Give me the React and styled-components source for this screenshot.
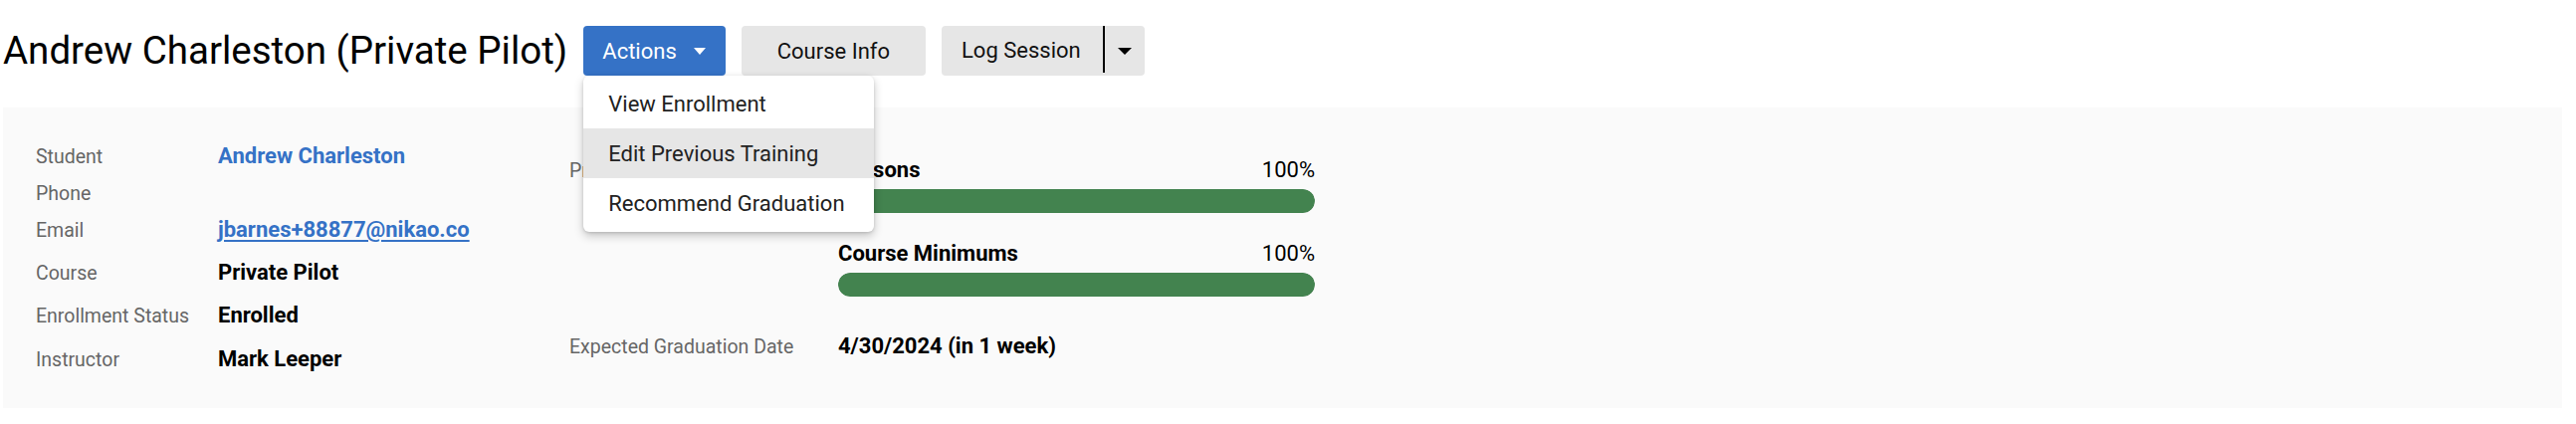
import React from "react";
import styled, { createGlobalStyle } from "styled-components";

const GlobalStyle = createGlobalStyle`
  body {
    margin: 0;
    background: #fff;
    font-family: Roboto, "Liberation Sans", Arial, sans-serif;
    color: #000;
  }
`;

const Page = styled.div`
  padding: 26px 14px 0 3px;
`;

const Header = styled.div`
  display: flex;
  align-items: center;
  gap: 16px;
  margin-bottom: 32px;
`;

const Title = styled.h1`
  margin: 0;
  font-size: 38.5px;
  font-weight: 400;
  line-height: 44px;
  white-space: nowrap;
`;

const Button = styled.button`
  display: flex;
  align-items: center;
  height: 50px;
  padding: ${(p) => p.$pad || "0 20px"};
  border: none;
  border-radius: 4px;
  background: ${(p) => (p.$primary ? "#3572c6" : "#e6e6e6")};
  color: ${(p) => (p.$primary ? "#fff" : "#111")};
  font-family: inherit;
  font-size: 22px;
  white-space: nowrap;
  cursor: pointer;
`;

const Caret = styled.span`
  display: inline-block;
  width: 0;
  height: 0;
  margin-left: ${(p) => p.$gap || 0}px;
  border-left: ${(p) => p.$w / 2}px solid transparent;
  border-right: ${(p) => p.$w / 2}px solid transparent;
  border-top: 7px solid ${(p) => p.$color};
`;

const ActionsWrap = styled.div`
  position: relative;
`;

const SplitButton = styled.div`
  display: flex;
  height: 50px;
  border-radius: 4px;
  background: #e6e6e6;
  overflow: hidden;
`;

const SplitMain = styled.button`
  height: 47px;
  padding: 0 22px 0 20px;
  border: none;
  border-right: 2px solid #000;
  background: transparent;
  color: #111;
  font-family: inherit;
  font-size: 22px;
  line-height: 50px;
  white-space: nowrap;
  cursor: pointer;
`;

const SplitToggle = styled.button`
  display: flex;
  align-items: center;
  padding: 0 13px;
  border: none;
  background: transparent;
  cursor: pointer;
`;

const Menu = styled.ul`
  position: absolute;
  top: 100%;
  left: 0;
  margin: 0;
  width: 292px;
  box-sizing: border-box;
  padding: 3px 0 4px;
  list-style: none;
  background: #fff;
  border-radius: 6px;
  box-shadow: 0 4px 10px rgba(0, 0, 0, 0.22), 0 1px 3px rgba(0, 0, 0, 0.12);
  z-index: 10;
`;

const MenuItem = styled.li`
  height: 50px;
  display: flex;
  align-items: center;
  padding: 0 25px;
  font-size: 22px;
  color: #222;
  white-space: nowrap;
  background: ${(p) => (p.$active ? "#e6e6e6" : "transparent")};
  cursor: pointer;
`;

const Panel = styled.div`
  display: grid;
  grid-template-columns: 536px 1fr;
  height: 302px;
  box-sizing: border-box;
  padding: 36px 33px 0;
  background: #fafafa;
`;

const InfoTable = styled.div`
  display: grid;
  grid-template-columns: 183px 1fr;
  grid-template-rows: 37px 37px 43px 43px 44px 44px;
`;

const Label = styled.div`
  font-size: 19.5px;
  color: #666;
  line-height: 23px;
  padding-top: 2px;
  white-space: nowrap;
`;

const Value = styled.div`
  font-size: 22px;
  font-weight: 700;
  line-height: 26px;
  color: #000;
`;

const Link = styled.a`
  font-size: 22px;
  font-weight: 700;
  line-height: 26px;
  color: #3572c6;
  text-decoration: ${(p) => (p.$underline ? "underline" : "none")};
  text-underline-offset: 3px;
  text-decoration-thickness: 2px;
`;

const SideTable = styled.div`
  display: grid;
  grid-template-columns: 270px 479px;
  align-content: start;
  row-gap: 37px;
  padding-top: 14px;
`;

const Progress = styled.div`
  display: flex;
  flex-direction: column;
  gap: 28px;
`;

const ProgressHead = styled.div`
  display: flex;
  justify-content: space-between;
  font-size: 22px;
  line-height: 26px;
`;

const ProgressName = styled.span`
  font-weight: 700;
`;

const Track = styled.div`
  height: 24px;
  margin-top: 6px;
  border-radius: 12px;
  background: #e2e2e2;
  overflow: hidden;
`;

const Fill = styled.div`
  height: 100%;
  border-radius: 12px;
  background: #43834f;
`;

const info = [
  ["Student", <Link href="#">Andrew Charleston</Link>],
  ["Phone", null],
  ["Email", <Link href="#" $underline>jbarnes+88877@nikao.co</Link>],
  ["Course", <Value>Private Pilot</Value>],
  ["Enrollment Status", <Value>Enrolled</Value>],
  ["Instructor", <Value>Mark Leeper</Value>],
];

const progress = [
  { name: "Lessons", pct: 100 },
  { name: "Course Minimums", pct: 100 },
];

export default function App() {
  return (
    <Page>
      <GlobalStyle />
      <Header>
        <Title>Andrew Charleston (Private Pilot)</Title>
        <ActionsWrap>
          <Button $primary $pad="0 20px 0 19px">
            Actions
            <Caret $w={13} $gap={17} $color="#fff" />
          </Button>
          <Menu>
            <MenuItem>View Enrollment</MenuItem>
            <MenuItem $active>Edit Previous Training</MenuItem>
            <MenuItem>Recommend Graduation</MenuItem>
          </Menu>
        </ActionsWrap>
        <Button $pad="0 36px">Course Info</Button>
        <SplitButton>
          <SplitMain>Log Session</SplitMain>
          <SplitToggle>
            <Caret $w={15} $color="#000" />
          </SplitToggle>
        </SplitButton>
      </Header>

      <Panel>
        <InfoTable>
          {info.map(([label, value]) => (
            <React.Fragment key={label}>
              <Label>{label}</Label>
              <div>{value}</div>
            </React.Fragment>
          ))}
        </InfoTable>

        <SideTable>
          <Label>Progress</Label>
          <Progress>
            {progress.map((p) => (
              <div key={p.name}>
                <ProgressHead>
                  <ProgressName>{p.name}</ProgressName>
                  <span>{p.pct}%</span>
                </ProgressHead>
                <Track>
                  <Fill style={{ width: `${p.pct}%` }} />
                </Track>
              </div>
            ))}
          </Progress>
          <Label>Expected Graduation Date</Label>
          <Value>4/30/2024 (in 1 week)</Value>
        </SideTable>
      </Panel>
    </Page>
  );
}
